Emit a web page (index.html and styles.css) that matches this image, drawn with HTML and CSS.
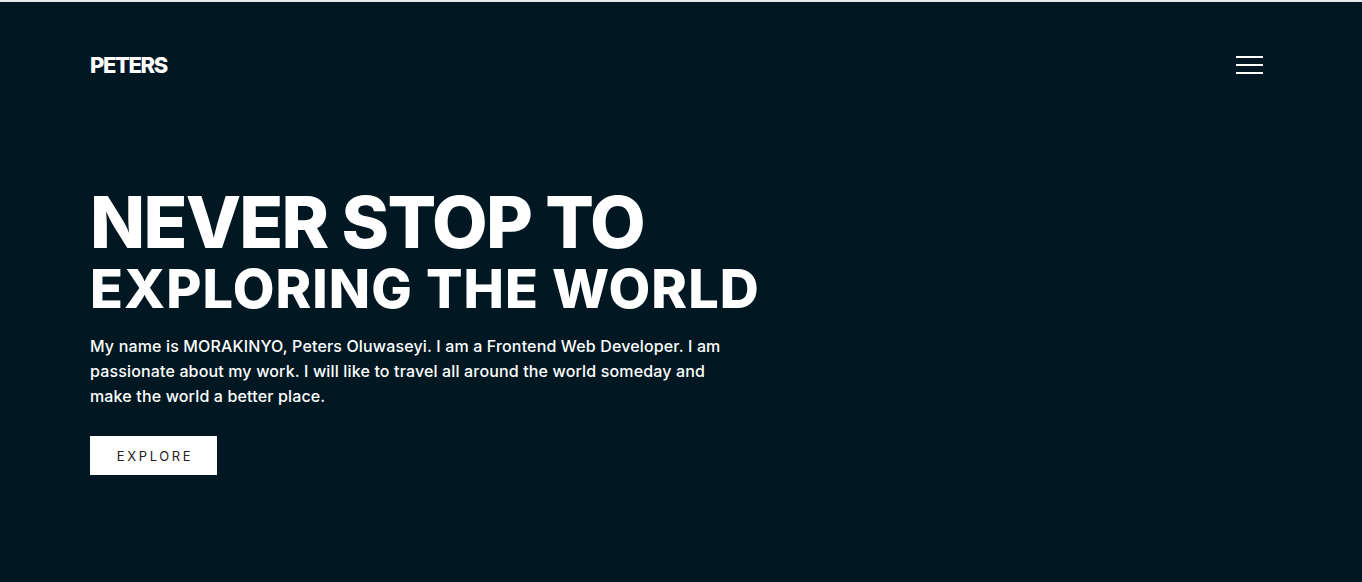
FILE: index.html
```html
<!DOCTYPE html>
<html lang="en">
<head>
<meta charset="utf-8">
<title>Peters</title>
<link rel="stylesheet" href="styles.css">
</head>
<body>
<div class="page">
  <header class="nav">
    <div class="logo">PETERS</div>
    <button class="burger" aria-label="menu">
      <span></span><span></span><span></span>
    </button>
  </header>
  <section class="hero">
    <h1 class="title">
      <span class="line1">NEVER STOP TO</span>
      <span class="line2">EXPLORING THE WORLD</span>
    </h1>
    <p class="intro">My name is MORAKINYO, Peters Oluwaseyi. I am a Frontend Web Developer. I am passionate about my work. I will like to travel all around the world someday and make the world a better place.</p>
    <a class="btn" href="#">EXPLORE</a>
  </section>
</div>
</body>
</html>
```

FILE: styles.css
```css
* { box-sizing: border-box; }
html, body { margin: 0; padding: 0; }
body {
  background: #011823;
  color: #fff;
  font-family: "Inter", "Open Sans", sans-serif;
  height: 582px;
  overflow: hidden;
}
.page {
  border-top: 2px solid #e6e8e9;
  min-height: 582px;
  padding: 0 99px 0 90px;
}
.nav {
  display: flex;
  justify-content: space-between;
  align-items: center;
  height: 126px;
}
.logo {
  font-size: 22px;
  font-weight: 800;
  letter-spacing: -1.4px;
}
.burger {
  width: 27px;
  height: 18px;
  padding: 0;
  border: 0;
  background: transparent;
  display: flex;
  flex-direction: column;
  justify-content: space-between;
}
.burger span {
  display: block;
  height: 2px;
  background: #fff;
}
.hero { padding-top: 58px; }
.title {
  margin: 0;
  font-weight: 800;
  display: flex;
  flex-direction: column;
}
.line1 { font-size: 72px; line-height: 72px; letter-spacing: -1.7px; }
.line2 { font-size: 54px; line-height: 62px; letter-spacing: 1.1px; }
.intro {
  margin: 14px 0 0;
  max-width: 650px;
  font-size: 16px;
  line-height: 25px;
  font-weight: 500;
  letter-spacing: 0.15px;
}
.btn {
  display: inline-flex;
  align-items: center;
  justify-content: center;
  margin-top: 27px;
  width: 127px;
  height: 39px;
  background: #fff;
  color: #222;
  text-decoration: none;
  font-size: 13px;
  letter-spacing: 2.6px;
  padding-left: 3px;
}
```
